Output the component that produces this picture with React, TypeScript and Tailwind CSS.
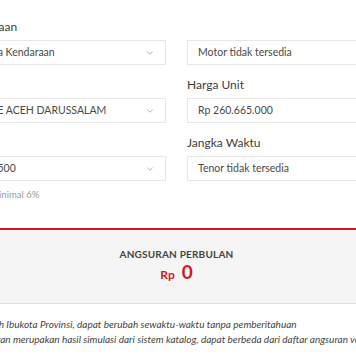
import React from 'react';
import { ChevronDown } from 'lucide-react';

const font = { fontFamily: 'Lato, "Open Sans", sans-serif' };

interface FieldProps {
  label?: string;
  value: string;
  select?: boolean;
  shift?: string;
}

const Field: React.FC<FieldProps> = ({ label, value, select, shift }) => (
  <div className="flex flex-col">
    <div className="h-4 mb-[5px] text-[12px] leading-4 text-[#3d3d3d] whitespace-nowrap">{label}</div>
    <div className="h-[25px] flex items-center justify-between border border-[#e6e6e6] bg-white pl-[10px] pr-[10px] overflow-hidden">
      <span className={`text-[10.5px] text-[#4a4a4a] whitespace-nowrap ${shift ?? ''}`}>{value}</span>
      {select && <ChevronDown className="h-[10px] w-[10px] shrink-0 text-[#888]" strokeWidth={1.5} />}
    </div>
  </div>
);

export default function App() {
  return (
    <div className="w-[356px] h-[364px] overflow-hidden bg-white" style={font}>
      <div className="ml-[-39px] w-[431px] pt-[19px] flex flex-col">
        <div className="grid grid-cols-[205px_205px] gap-x-[21px] gap-y-[12px]">
          <Field label="Kendaraan" value="Semua Kendaraan" select />
          <Field label="" value="Motor tidak tersedia" />
          <Field label="Lokasi" value="NANGGROE ACEH DARUSSALAM" select shift="-ml-[28px]" />
          <Field label="Harga Unit" value="Rp 260.665.000" />
          <Field label="DP" value="Rp 15.640.500" select shift="-ml-[25px]" />
          <Field label="Jangka Waktu" value="Tenor tidak tersedia" />
        </div>
        <div className="mt-2 h-3 text-[9.5px] leading-3 text-[#9a9a9a] whitespace-nowrap">
          <span className="-ml-[19px]">Uang muka minimal 6%</span>
        </div>

        <div className="mt-[27px] border-t-2 border-[#d0191f] border-b border-b-[#dedede] bg-[#f5f5f5] h-[76px] flex flex-col items-center pt-[17px]">
          <div className="text-[10px] leading-[14px] font-bold text-[#444] tracking-[0.2px]">ANGSURAN PERBULAN</div>
          <div className="mt-[1px] flex items-baseline gap-[7px] text-[#d0191f] font-bold leading-[20px]">
            <span className="text-[12px]">Rp</span>
            <span className="text-[19px]">0</span>
          </div>
        </div>

        <div className="mt-[13px] flex flex-col text-[10px] leading-[15px] italic text-[#444] whitespace-nowrap">
          <span className="-ml-[116px]">*Harga merupakan harga OTR wilayah Ibukota Provinsi, dapat berubah sewaktu-waktu tanpa pemberitahuan</span>
          <span className="-ml-[29px]">*Simulasi angsuran merupakan hasil simulasi dari sistem katalog, dapat berbeda dari daftar angsuran versi dealer</span>
        </div>
      </div>
    </div>
  );
}
